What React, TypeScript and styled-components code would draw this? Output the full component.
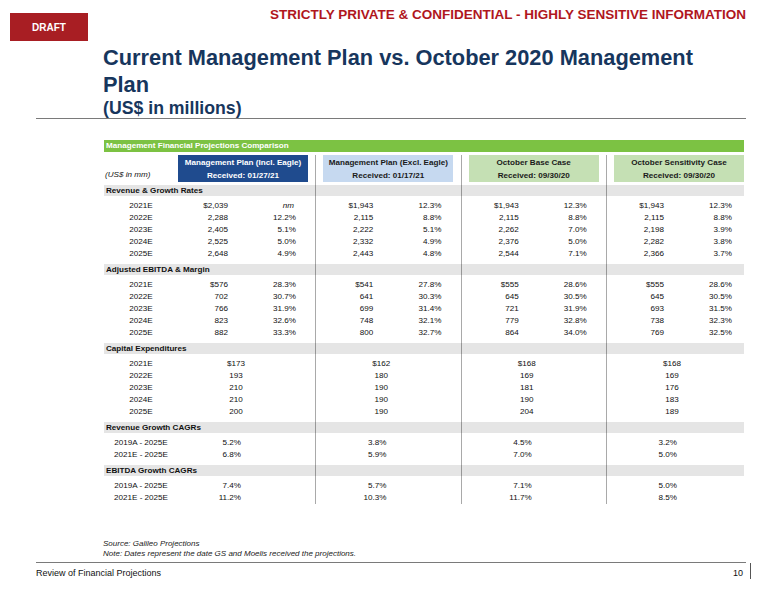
import React from "react";
import styled, { createGlobalStyle } from "styled-components";

const GlobalStyle = createGlobalStyle`
  html, body { margin: 0; padding: 0; background: #fff; }
  body { font-family: "Liberation Sans", Arial, sans-serif; color: #111; }
`;

const Page = styled.div`
  width: 780px;
  height: 603px;
  box-sizing: border-box;
  padding-bottom: 24px;
  overflow: hidden;
  display: flex;
  flex-direction: column;
`;

const TopBar = styled.div`
  display: flex;
  align-items: flex-start;
  height: 41px;
`;

const DraftBadge = styled.div`
  margin: 13px 0 0 10px;
  width: 78px;
  height: 28px;
  background: #a81e23;
  color: #fff;
  font-weight: 700;
  font-size: 10px;
  display: flex;
  align-items: center;
  justify-content: center;
`;

const Confidential = styled.div`
  margin: 7px 34px 0 auto;
  color: #b0161d;
  font-weight: 700;
  font-size: 13.5px;
  line-height: 16px;
  white-space: nowrap;
`;

const TitleBlock = styled.div`
  margin: 3px 0 0 103px;
  color: #17365d;
`;

const Title = styled.h1`
  margin: 0;
  width: 610px;
  font-size: 21.8px;
  line-height: 27px;
  font-weight: 700;
`;

const Subtitle = styled.h2`
  margin: 0;
  font-size: 17.7px;
  line-height: 20px;
  font-weight: 700;
`;

const Rule = styled.div`
  height: 1px;
  margin: 0 34px 0 36px;
  background: #7a7a7a;
`;

const Table = styled.div`
  margin: 21px 0 0 104px;
  width: 640px;
  font-size: 8.1px;
`;

const GreenBar = styled.div`
  height: 12px;
  line-height: 12px;
  padding-left: 2px;
  background: #7cc243;
  color: #fff;
  font-weight: 700;
`;

const Body = styled.div`
  margin-top: 3px;
  background:
    linear-gradient(#a9a9a9, #a9a9a9) 211px 0 / 1px 100% no-repeat,
    linear-gradient(#a9a9a9, #a9a9a9) 357px 0 / 1px 100% no-repeat,
    linear-gradient(#a9a9a9, #a9a9a9) 502px 0 / 1px 100% no-repeat;
`;

/* label column, then four column groups 145.33px apart, each 130px wide */
const gridCols = `
  display: grid;
  grid-template-columns: 74px 145.33px 145.33px 145.33px 130px;
`;

const HeaderRow = styled.div`
  ${gridCols}
  height: 27px;
`;

const UnitsLabel = styled.div`
  align-self: end;
  padding: 0 0 1px 1px;
  line-height: 13px;
  font-style: italic;
`;

type Variant = "navy" | "blue" | "green";

const HeaderBox = styled.div<{ $variant: Variant }>`
  box-sizing: border-box;
  width: 130px;
  padding-top: 1px;
  text-align: center;
  font-weight: 700;
  line-height: 13px;
  white-space: nowrap;
  background: ${(p) =>
    p.$variant === "navy" ? "#1f4b8e" : p.$variant === "blue" ? "#c6d9f0" : "#c5e0b4"};
  color: ${(p) => (p.$variant === "navy" ? "#fff" : "#1a1a1a")};
`;

const Sections = styled.div`
  margin-top: 3px;
`;

const Band = styled.div`
  height: 11px;
  line-height: 11px;
  padding-left: 2px;
  background: rgba(0, 0, 0, 0.1);
  font-weight: 700;
`;

const Rows = styled.div<{ $last?: boolean }>`
  padding: 4px 0 ${(p) => (p.$last ? "0" : "4px")};
`;

const Row = styled.div`
  ${gridCols}
  height: 12px;
  line-height: 12px;
`;

const Label = styled.div`
  text-align: center;
  white-space: nowrap;
`;

const Pair = styled.div`
  display: grid;
  grid-template-columns: 50px 68px;
`;

const Num = styled.span<{ $italic?: boolean }>`
  text-align: right;
  font-style: ${(p) => (p.$italic ? "italic" : "normal")};
  padding-right: ${(p) => (p.$italic ? "2px" : "0")};
`;

const Centered = styled.div`
  width: 116px;
  text-align: center;
`;

const RightAt = styled.div`
  width: 63px;
  text-align: right;
`;

const Notes = styled.div`
  margin: auto 0 3px 103px;
  font-size: 8px;
  line-height: 10px;
  font-style: italic;
  color: #222;
`;

const FooterRow = styled.div`
  display: flex;
  justify-content: space-between;
  align-items: flex-start;
  padding: 0 29px 0 36px;
  font-size: 9px;
  line-height: 12px;
`;

const FooterText = styled.div`
  padding-top: 4px;
`;

const PageNum = styled.div`
  padding: 4px 7px 0 0;
  border-right: 1px solid #555;
`;

type Sec =
  | { title: string; kind: "pair"; rows: [string, [string, string][]][] }
  | { title: string; kind: "single" | "cagr"; rows: [string, string[]][] };

const sections: Sec[] = [
  {
    title: "Revenue & Growth Rates",
    kind: "pair",
    rows: [
      ["2021E", [["$2,039", "nm"], ["$1,943", "12.3%"], ["$1,943", "12.3%"], ["$1,943", "12.3%"]]],
      ["2022E", [["2,288", "12.2%"], ["2,115", "8.8%"], ["2,115", "8.8%"], ["2,115", "8.8%"]]],
      ["2023E", [["2,405", "5.1%"], ["2,222", "5.1%"], ["2,262", "7.0%"], ["2,198", "3.9%"]]],
      ["2024E", [["2,525", "5.0%"], ["2,332", "4.9%"], ["2,376", "5.0%"], ["2,282", "3.8%"]]],
      ["2025E", [["2,648", "4.9%"], ["2,443", "4.8%"], ["2,544", "7.1%"], ["2,366", "3.7%"]]],
    ],
  },
  {
    title: "Adjusted EBITDA & Margin",
    kind: "pair",
    rows: [
      ["2021E", [["$576", "28.3%"], ["$541", "27.8%"], ["$555", "28.6%"], ["$555", "28.6%"]]],
      ["2022E", [["702", "30.7%"], ["641", "30.3%"], ["645", "30.5%"], ["645", "30.5%"]]],
      ["2023E", [["766", "31.9%"], ["699", "31.4%"], ["721", "31.9%"], ["693", "31.5%"]]],
      ["2024E", [["823", "32.6%"], ["748", "32.1%"], ["779", "32.8%"], ["738", "32.3%"]]],
      ["2025E", [["882", "33.3%"], ["800", "32.7%"], ["864", "34.0%"], ["769", "32.5%"]]],
    ],
  },
  {
    title: "Capital Expenditures",
    kind: "single",
    rows: [
      ["2021E", ["$173", "$162", "$168", "$168"]],
      ["2022E", ["193", "180", "169", "169"]],
      ["2023E", ["210", "190", "181", "176"]],
      ["2024E", ["210", "190", "190", "183"]],
      ["2025E", ["200", "190", "204", "189"]],
    ],
  },
  {
    title: "Revenue Growth CAGRs",
    kind: "cagr",
    rows: [
      ["2019A - 2025E", ["5.2%", "3.8%", "4.5%", "3.2%"]],
      ["2021E - 2025E", ["6.8%", "5.9%", "7.0%", "5.0%"]],
    ],
  },
  {
    title: "EBITDA Growth CAGRs",
    kind: "cagr",
    rows: [
      ["2019A - 2025E", ["7.4%", "5.7%", "7.1%", "5.0%"]],
      ["2021E - 2025E", ["11.2%", "10.3%", "11.7%", "8.5%"]],
    ],
  },
];

const headers: { name: string; date: string; variant: Variant }[] = [
  { name: "Management Plan (Incl. Eagle)", date: "Received: 01/27/21", variant: "navy" },
  { name: "Management Plan (Excl. Eagle)", date: "Received: 01/17/21", variant: "blue" },
  { name: "October Base Case", date: "Received: 09/30/20", variant: "green" },
  { name: "October Sensitivity Case", date: "Received: 09/30/20", variant: "green" },
];

export default function App() {
  return (
    <>
      <GlobalStyle />
      <Page>
        <TopBar>
          <DraftBadge>DRAFT</DraftBadge>
          <Confidential>STRICTLY PRIVATE &amp; CONFIDENTIAL - HIGHLY SENSITIVE INFORMATION</Confidential>
        </TopBar>
        <TitleBlock>
          <Title>Current Management Plan vs. October 2020 Management Plan</Title>
          <Subtitle>(US$ in millions)</Subtitle>
        </TitleBlock>
        <Rule />
        <Table>
          <GreenBar>Management Financial Projections Comparison</GreenBar>
          <Body>
            <HeaderRow>
              <UnitsLabel>(US$ in mm)</UnitsLabel>
              {headers.map((h) => (
                <HeaderBox key={h.name} $variant={h.variant}>
                  <div>{h.name}</div>
                  <div>{h.date}</div>
                </HeaderBox>
              ))}
            </HeaderRow>
            <Sections>
              {sections.map((s, si) => (
                <div key={s.title}>
                  <Band>{s.title}</Band>
                  <Rows $last={si === sections.length - 1}>
                    {s.kind === "pair"
                      ? s.rows.map(([label, cells]) => (
                          <Row key={label}>
                            <Label>{label}</Label>
                            {cells.map(([v, p], i) => (
                              <Pair key={i}>
                                <Num>{v}</Num>
                                <Num $italic={p === "nm"}>{p}</Num>
                              </Pair>
                            ))}
                          </Row>
                        ))
                      : s.rows.map(([label, cells]) => (
                          <Row key={label}>
                            <Label>{label}</Label>
                            {cells.map((v, i) =>
                              s.kind === "single" ? (
                                <Centered key={i}>{v}</Centered>
                              ) : (
                                <RightAt key={i}>{v}</RightAt>
                              )
                            )}
                          </Row>
                        ))}
                  </Rows>
                </div>
              ))}
            </Sections>
          </Body>
        </Table>
        <Notes>
          <div>Source: Galileo Projections</div>
          <div>Note: Dates represent the date GS and Moelis received the projections.</div>
        </Notes>
        <Rule />
        <FooterRow>
          <FooterText>Review of Financial Projections</FooterText>
          <PageNum>10</PageNum>
        </FooterRow>
      </Page>
    </>
  );
}
